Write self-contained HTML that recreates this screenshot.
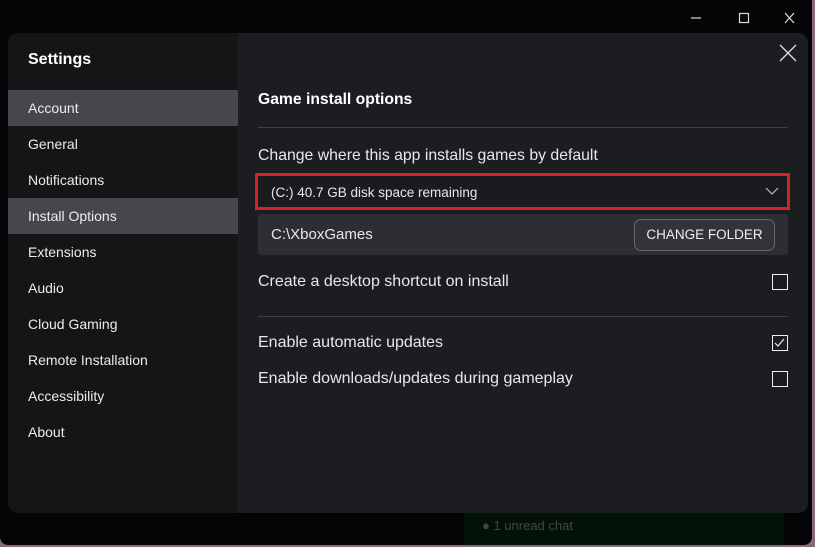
<!DOCTYPE html>
<html><head><style>
*{margin:0;padding:0;box-sizing:border-box}
body{width:815px;height:547px;background:#8a6a7a;position:relative;overflow:hidden;font-family:"Liberation Sans",sans-serif;color:#e8e8e8}
.win{position:absolute;left:0;top:0;width:812px;height:545px;background:#050507;border-radius:0 0 8px 8px;overflow:hidden}
.dlg{position:absolute;left:8px;top:33px;width:800px;height:480px;background:#1c1d21;border-radius:10px;overflow:hidden}
.side{position:absolute;left:0;top:0;width:230px;height:480px;background:#141517}
.side h1{position:absolute;left:20px;top:18px;font-size:16px;font-weight:bold;color:#fff}
.it{position:absolute;left:0;width:230px;height:36px;line-height:36px;padding-left:20px;font-size:14px;color:#ececec}
.sel{background:#45474c}
.t{position:absolute;font-size:16px;color:#e8e8e8}
.hr{position:absolute;left:250px;width:530px;height:1px;background:#3f4045}
.cb{position:absolute;left:764px;width:16px;height:16px;border:1.5px solid #eee}
.green{position:absolute;left:464px;top:513px;width:320px;height:34px;background:#021208}
</style></head><body>
<div class="win">
<svg style="position:absolute;left:690px;top:8px" width="115" height="20" viewBox="0 0 115 20" fill="none" stroke="#ddd" stroke-width="1.2">
<line x1="1" y1="10" x2="11" y2="10"/><rect x="49.5" y="5.5" width="9" height="9"/><path d="M95 5l9 10M104 5l-9 10"/></svg>
<div class="dlg">
<div class="side">
<h1>Settings</h1>
<div class="it sel" style="top:57px">Account</div>
<div class="it" style="top:93px">General</div>
<div class="it" style="top:129px">Notifications</div>
<div class="it sel" style="top:165px">Install Options</div>
<div class="it" style="top:201px">Extensions</div>
<div class="it" style="top:237px">Audio</div>
<div class="it" style="top:273px">Cloud Gaming</div>
<div class="it" style="top:309px">Remote Installation</div>
<div class="it" style="top:345px">Accessibility</div>
<div class="it" style="top:381px">About</div>
</div>
<svg style="position:absolute;left:771px;top:11px" width="18" height="18" fill="none" stroke="#ddd" stroke-width="1.3"><path d="M1 1l16 16M17 1L1 17"/></svg>
<div class="t" style="left:250px;top:58px;font-weight:bold;color:#fff;font-size:15.7px">Game install options</div>
<div class="hr" style="top:94px"></div>
<div class="t" style="left:250px;top:114px;font-size:15.8px">Change where this app installs games by default</div>
<div style="position:absolute;left:247px;top:140px;width:535px;height:37px;border:3px solid #d8202a;background:#1a1b1f"></div>
<div class="t" style="left:263px;top:152px;font-size:13.5px">(C:) 40.7 GB disk space remaining</div>
<svg style="position:absolute;left:757px;top:154px" width="14" height="9" fill="none" stroke="#bbb" stroke-width="1.2"><path d="M1 1l6 6 6-6"/></svg>
<div style="position:absolute;left:250px;top:181px;width:530px;height:41px;background:#2d2e33;border-radius:3px"></div>
<div class="t" style="left:263px;top:193px;font-size:15px">C:\XboxGames</div>
<div style="position:absolute;left:626px;top:186px;width:141px;height:32px;border:1px solid #66686d;border-radius:7px;background:#333439;font-size:13.5px;line-height:30px;text-align:center;color:#eee">CHANGE FOLDER</div>
<div class="t" style="left:250px;top:240px">Create a desktop shortcut on install</div>
<div class="cb" style="top:241px"></div>
<div class="hr" style="top:283px"></div>
<div class="t" style="left:250px;top:301px">Enable automatic updates</div>
<div class="cb" style="top:302px"><svg width="13" height="13" style="position:absolute;left:0;top:0" fill="none" stroke="#eee" stroke-width="1.2"><path d="M2 7l3 3 6-7"/></svg></div>
<div class="t" style="left:250px;top:337px">Enable downloads/updates during gameplay</div>
<div class="cb" style="top:338px"></div>
</div>
<div class="green"><span style="position:absolute;left:18px;top:5px;font-size:13px;color:#3d4a42">● 1 unread chat</span></div>
</div>
</body></html>
